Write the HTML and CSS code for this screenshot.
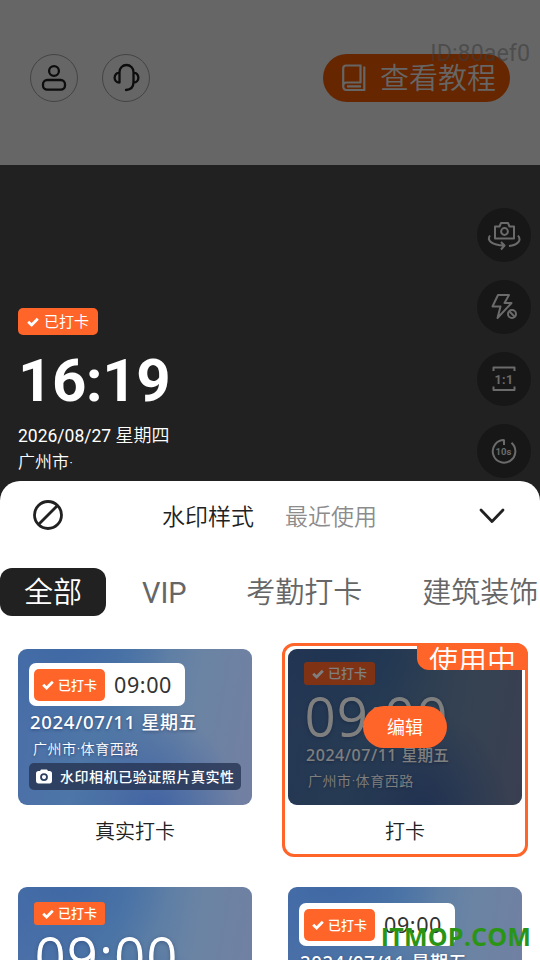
FILE: index.html
```
<!DOCTYPE html>
<html lang="zh-CN">
<head>
<meta charset="utf-8">
<title>水印样式</title>
<link rel="stylesheet" href="styles.css">
</head>
<body>
<svg class="defs" width="0" height="0">
  <symbol id="check" viewBox="0 0 12 10"><path d="M1.200 4.700 4.600 8 10.800 1.800" fill="none" stroke="currentColor" stroke-width="2.800"/></symbol>
</svg>
<main class="phone">
  <header class="topbar">
    <span class="round"><svg width="48" height="48" viewBox="0 0 48 48"><circle cx="24" cy="17" r="4.900"/><rect x="13" y="26" width="22" height="9.700" rx="4.200"/></svg></span>
    <span class="round"><svg width="48" height="48" viewBox="0 0 48 48"><path d="M17.500 28.500V18a7 7 0 0 1 14 0v10q0 7.500-7.500 8M17.500 18.500c-6.500 .5-6.500 10 0 10M31.500 18.500c6.500 .5 6.500 10 0 10"/></svg></span>
    <span class="guide">
      <svg width="24" height="28" viewBox="0 0 24 28"><path d="M1.200 22V4.500q0-3 3-3h14.300V18.500H4.500q-3.300 0-3.300 3.500 0 4 3.300 4H22.300V2.500M5 22.300h14"/></svg>
      <span class="guide-text">查看教程</span>
    </span>
    <span class="uid">ID:80aef0</span>
  </header>

  <section class="camera">
    <div class="stamp">
      <span class="stamp-tag"><svg width="12" height="10"><use href="#check"/></svg><span>已打卡</span></span>
      <div class="stamp-time">16:19</div>
      <div class="stamp-date">2026/08/27 <span>星期四</span></div>
      <div class="stamp-place">广州市·</div>
    </div>
    <nav class="tools">
      <span class="tool"><svg viewBox="0 0 54 54"><path d="M18 18.500h4.500l1.500-3.500h7l1.500 3.500H37v12H18zM13 27.500c-4 5.500 3 9.500 13.500 10M24 34l3.500 3.500-3.500 4M41 27.500c4 5-.5 9.500-9 10.500"/><circle cx="27.500" cy="23.500" r="3.400"/></svg></span>
      <span class="tool"><svg viewBox="0 0 54 54"><path d="M21 15h11l-4.500 8h7L20.500 38l3-11.500h-8z"/><circle cx="35" cy="34" r="4"/><path d="m32 31 6 6"/></svg></span>
      <span class="tool"><svg viewBox="0 0 54 54"><path d="M16.500 19v-3.500h21V19M16.500 34.500v3.500h21v-3.500"/><text class="ratio" x="27" y="31.500">1:1</text></svg></span>
      <span class="tool"><svg viewBox="0 0 54 54"><path d="M27 15.500v5.500M27 16A11.300 11.300 0 1 0 34.500 18.800"/><text class="timer" x="26.500" y="30.500">10s</text></svg></span>
    </nav>
  </section>

  <section class="sheet">
    <div class="sheet-head">
      <svg class="none" width="32" height="32" viewBox="0 0 32 32"><circle cx="16" cy="16" r="13.500"/><path d="M25.500 6.500 6.500 25.500"/></svg>
      <h1>水印样式</h1>
      <span class="recent">最近使用</span>
      <svg class="fold" width="26" height="16" viewBox="0 0 26 16"><path d="M2 2l11 11.500L24 2"/></svg>
    </div>
    <nav class="tabs">
      <span class="tab active">全部</span><span class="tab latin">VIP</span><span class="tab">考勤打卡</span><span class="tab">建筑装饰</span>
    </nav>
    <div class="grid">
      <article class="card">
        <div class="preview real">
          <div class="clock"><span class="tag tall"><svg width="12" height="10"><use href="#check"/></svg>已打卡</span><span class="clock-time">09:00</span></div>
          <div class="date">2024/07/11 <span>星期五</span></div>
          <div class="place">广州市·体育西路</div>
          <div class="verified"><svg width="18" height="16" viewBox="0 0 18 16"><path fill="#fff" fill-rule="evenodd" d="M5 2l1-1.500h6L13 2h1.500Q17 2 17 4.500v7q0 3-2.500 3h-11Q1 14.500 1 11.500v-7Q1 2 3.500 2zM9 4.200a3.900 3.900 0 1 0 0 7.800 3.900 3.900 0 0 0 0-7.800zm0 1.800a2.100 2.100 0 1 1 0 4.200 2.100 2.100 0 0 1 0-4.200z"/></svg><span>水印相机已验证照片真实性</span></div>
        </div>
        <div class="caption">真实打卡</div>
      </article>
      <article class="card selected">
        <div class="preview plain">
          <span class="tag"><svg width="12" height="10"><use href="#check"/></svg>已打卡</span>
          <div class="big">09:00</div>
          <div class="date small">2024/07/11 <span>星期五</span></div>
          <div class="place">广州市·体育西路</div>
          <div class="shade"><span class="edit">编辑</span></div>
        </div>
        <span class="using">使用中</span>
        <div class="caption">打卡</div>
      </article>
      <article class="card">
        <div class="preview plain low">
          <span class="tag"><svg width="12" height="10"><use href="#check"/></svg>已打卡</span>
          <div class="big">09:00</div>
        </div>
      </article>
      <article class="card">
        <div class="preview real low">
          <div class="clock"><span class="tag tall"><svg width="12" height="10"><use href="#check"/></svg>已打卡</span><span class="clock-time">09:00</span></div>
          <div class="date">2024/07/11 <span>星期五</span></div>
        </div>
      </article>
    </div>
  </section>
  <span class="site">ITMOP.COM</span>
</main>
</body>
</html>
```
FILE: styles.css
```
* { box-sizing: border-box; }
body { margin: 0; font-family: Roboto, "Noto Sans CJK SC", sans-serif; }
.defs { position: absolute; }
.phone { position: relative; width: 540px; height: 960px; overflow: hidden; background: #fff; }

.topbar { position: relative; display: flex; align-items: flex-start; gap: 24px; height: 165px; padding: 54px 30px 0; background: #666; }
.round { width: 48px; height: 48px; border: 1px solid #444; border-radius: 50%; }
.round svg { display: block; margin: -1px; fill: none; stroke: #0d0d0d; stroke-width: 2.300; stroke-linecap: round; stroke-linejoin: round; }
.guide { display: flex; align-items: center; width: 187px; height: 48px; margin-left: auto; padding-left: 19px; border-radius: 24px; background: #662600; color: #666; }
.guide svg { fill: none; stroke: #666; stroke-width: 2.200; }
.guide-text { margin-left: 14px; padding-top: 2px; font-size: 29px; line-height: 48px; font-weight: 350; white-space: nowrap; }
.uid { position: absolute; top: 39px; right: 10px; font-size: 23.300px; font-weight: 400; line-height: 28px; color: rgba(60, 60, 60, .6); }

.camera { display: flex; justify-content: space-between; height: 336px; background: #212121; }
.stamp { padding: 143px 0 0 18px; color: #fff; }
.stamp-tag { display: flex; align-items: center; gap: 5px; width: 80px; height: 27px; padding-left: 9px; border-radius: 5px; background: #ff6429; font-size: 15px; line-height: 27px; white-space: nowrap; }
.stamp-tag span { padding-top: 2px; }
.stamp-time { height: 70px; margin-top: 11px; font-size: 60px; line-height: 70px; font-weight: 700; letter-spacing: -.5px; }
.stamp-date { height: 26px; margin-top: 7px; font-size: 17.500px; line-height: 26px; white-space: nowrap; }
.stamp-date span { font-size: 18px; font-weight: 350; }
.stamp-place { font-size: 17px; line-height: 27px; font-weight: 350; }
.tools { display: flex; flex-direction: column; gap: 18px; padding: 43px 9px 0 0; }
.tool { width: 54px; height: 54px; border-radius: 50%; background: #171717; }
.tool svg { display: block; fill: none; stroke: #6b6b6b; stroke-width: 2; stroke-linejoin: round; }
.tool text { fill: #6b6b6b; stroke: none; font-weight: 700; text-anchor: middle; }
.ratio { font-size: 12.500px; letter-spacing: .4px; }
.timer { font-size: 9.500px; }

.sheet { position: relative; height: 500px; margin-top: -20px; border-radius: 20px 20px 0 0; background: #fff; }
.sheet-head { display: flex; align-items: center; height: 68px; padding: 0 35px 0 32px; font-size: 23px; font-weight: 350; }
.sheet-head svg { fill: none; stroke: #212121; stroke-width: 2.800; }
.sheet-head h1 { margin: 0 0 0 98px; font-size: 23px; font-weight: 350; color: #212121; }
.recent { margin-left: 31px; color: #8c8c8c; }
.fold { margin: 2px 0 0 auto; stroke-linecap: round; stroke-linejoin: round; }
.tabs { display: flex; gap: 12px; height: 48px; margin-top: 19px; overflow: hidden; }
.tab { flex: none; height: 48px; padding: 0 24px; border-radius: 12px; font-size: 29px; font-weight: 350; line-height: 50px; color: #666; white-space: nowrap; }
.tab.active { background: #212121; color: #fff; }
.tab.latin { padding-right: 23.500px; font-weight: 400; }

.grid { display: grid; grid-template-columns: 246px 246px; gap: 24px; padding: 27px 12px 0; }
.card { position: relative; height: 214px; padding: 3px; border: 3px solid transparent; border-radius: 12px; }
.card.selected { border-color: #ff6429; }
.preview { position: relative; height: 156px; border-radius: 9px; overflow: hidden; color: #fff; font-family: "Noto Sans", "Noto Sans CJK SC", sans-serif; white-space: nowrap; background: radial-gradient(ellipse at 58% 108%, #3f61a3 0, rgba(63, 97, 163, 0) 45%), radial-gradient(ellipse at 20% -5%, #3f69a5 0, rgba(63, 105, 165, 0) 40%), linear-gradient(100deg, #4a6ea8 0%, #4f78a6 40%, #6b84a4 72%, #727fa2 100%); }
.tag { display: flex; align-items: center; gap: 4px; width: 71px; height: 23px; padding-left: 8px; border-radius: 3px; background: #ff6429; color: #fff; font-size: 13px; font-weight: 500; line-height: 23px; }
.tag.tall { height: 32px; line-height: 32px; border-radius: 5px; }
.real { padding: 14px 11px 0; }
.clock { display: flex; align-items: center; width: 156px; height: 43px; padding-left: 5px; border-radius: 7px; background: #fff; }
.clock-time { margin-left: 9px; font-size: 21.500px; letter-spacing: .6px; color: #333; }
.date { height: 26px; margin: 3px 0 0 1px; font-size: 18.500px; font-weight: 500; line-height: 26px; letter-spacing: .7px; text-shadow: 0 1px 3px rgba(20, 40, 80, .5); }
.date span { font-size: 18px; letter-spacing: .5px; }
.place { height: 22px; margin: 3px 0 0 4px; font-size: 14px; font-weight: 350; line-height: 22px; letter-spacing: .55px; text-shadow: 0 1px 3px rgba(20, 40, 80, .5); }
.verified { display: flex; align-items: center; width: 212px; height: 27px; margin-top: 3px; padding-left: 6px; border-radius: 5px; background: rgba(39, 52, 82, .8); }
.verified span { margin-left: 7px; font-size: 14px; font-weight: 500; line-height: 27px; letter-spacing: .55px; }
.plain { padding: 13px 16px 0; }
.big { height: 57px; margin: 2px 0 0 1px; font-size: 53px; font-weight: 300; line-height: 57px; letter-spacing: 2px; -webkit-text-stroke: 1.200px currentColor; text-shadow: 0 1px 4px rgba(20, 40, 80, .5); }
.date.small { height: 22px; margin: 0 0 0 2px; font-size: 16px; line-height: 22px; letter-spacing: .55px; }
.date.small span { font-size: 15.500px; letter-spacing: .3px; }
.plain .place { margin-top: 4px; }
.plain.low { padding-top: 15px; }
.real.low { padding-top: 16px; }
.shade { position: absolute; inset: 0; display: flex; align-items: center; justify-content: center; background: rgba(0, 0, 0, .5); }
.edit { width: 84px; height: 42px; border-radius: 21px; background: #ff6429; color: #fff; font: 400 18px/43px Roboto, "Noto Sans CJK SC", sans-serif; text-align: center; }
.using { position: absolute; top: -3px; right: -3px; width: 111px; height: 27px; padding-left: 12px; border-radius: 0 12px 0 12px; overflow: hidden; background: #ff6429; color: #fff; font-size: 29px; font-weight: 350; line-height: 38px; white-space: nowrap; }
.caption { font-size: 20px; font-weight: 350; line-height: 30px; margin-top: 12px; text-align: center; color: #222; }

.site { position: absolute; right: 9px; bottom: 7px; font-family: "Open Sans", sans-serif; font-size: 25px; font-weight: 700; line-height: 34px; letter-spacing: .2px; color: #2a9414; }
```
